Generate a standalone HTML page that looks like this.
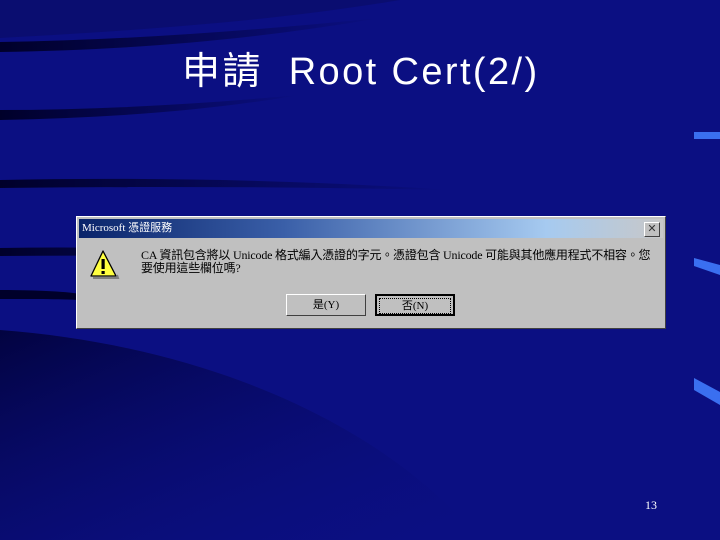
<!DOCTYPE html>
<html><head><meta charset="utf-8"><style>
body{margin:0;width:720px;height:540px;overflow:hidden;background:#0b0f82;font-family:"Liberation Sans","Noto Sans CJK TC",sans-serif;position:relative}
svg.bg{position:absolute;left:0;top:0}
.title{position:absolute;left:182px;top:40px;color:#fff;font-size:38px;letter-spacing:2.4px;font-family:"Liberation Sans","Noto Sans CJK TC",sans-serif;white-space:nowrap}
.dlg{position:absolute;left:76px;top:216px;width:590px;height:113px;background:#c0c0c0;border-top:1px solid #fff;border-left:1px solid #fff;border-right:1px solid #404040;border-bottom:1px solid #404040;box-sizing:border-box}
.tb{position:absolute;left:2px;top:2px;right:2px;height:19px;background:linear-gradient(90deg,#0a246a 0%,#3a5fa8 35%,#a6caf0 80%,#c8c8c8 100%);color:#fff;font-size:11px;line-height:19px;padding-left:3px;font-family:"Liberation Serif","Noto Sans CJK TC",serif}
.x{position:absolute;right:3px;top:3px;width:14px;height:13px;background:#c0c0c0;border:1px solid;border-color:#fff #404040 #404040 #fff;font-size:11px;line-height:12px;text-align:center;color:#333}
.msg{position:absolute;left:64px;top:32px;font-size:12px;line-height:13px;color:#000;font-family:"Liberation Serif","Noto Sans CJK TC",serif;white-space:nowrap;letter-spacing:-0.2px}
.btn{position:absolute;top:77px;width:80px;height:22px;background:#c0c0c0;box-sizing:border-box;border:1px solid;border-color:#fff #404040 #404040 #fff;font-size:11px;text-align:center;line-height:20px;font-family:"Liberation Serif","Noto Sans CJK TC",serif}
.b2{border:2px solid #000}
.b2 span{display:block;margin:2px;border:1px dotted #000;line-height:14px}
.num{position:absolute;left:645px;top:498px;color:#fff;font-size:12px;font-family:"Liberation Serif",serif}
</style></head><body>
<svg class="bg" width="720" height="540">
<defs><linearGradient id="g" x1="0" y1="0" x2="1" y2="1"><stop offset="0" stop-color="#000030"/><stop offset="1" stop-color="#0b0f82" stop-opacity="0"/></linearGradient>
<linearGradient id="s" x1="0" x2="1"><stop offset="0" stop-color="#00002a"/><stop offset="1" stop-color="#00002a" stop-opacity="0"/></linearGradient></defs>
<path d="M0,38 C150,30 280,20 400,0 L0,0Z" fill="#0a0d70"/>
<path d="M0,42 C120,40 240,32 380,18 C240,42 120,50 0,52Z" fill="url(#s)"/>
<path d="M0,110 C100,110 200,104 300,95 C200,112 100,118 0,120Z" fill="url(#s)"/>
<path d="M0,180 C150,177 300,180 450,190 C300,187 150,186 0,188Z" fill="url(#s)"/>
<path d="M0,248 C120,246 240,250 360,262 C240,256 120,255 0,256Z" fill="url(#s)"/>
<path d="M0,290 C40,290 70,292 80,294 L80,300 C60,299 30,299 0,299Z" fill="#00002a"/>
<path d="M0,330 C200,345 380,420 480,540 L0,540Z" fill="url(#g)" opacity="0.8"/>
<rect x="694" y="132" width="26" height="7" fill="#3a6ff0"/>
<path d="M694,258 L720,265 L720,275 L694,266Z" fill="#3a6ff0"/>
<path d="M694,378 L720,392 L720,405 L694,390Z" fill="#3a6ff0"/>
</svg>
<div class="title">申請&nbsp; Root Cert(2/)</div>
<div class="dlg">
<div class="tb">Microsoft 憑證服務<div class="x">✕</div></div>
<svg style="position:absolute;left:12px;top:32px" width="32" height="32"><path d="M14,2 L27,27 L2,27Z" fill="#ffff40" stroke="#000" stroke-width="1.3" stroke-linejoin="round"/><path d="M4,29 L29,29 L28,26" stroke="#808080" stroke-width="2" fill="none"/><rect x="12.5" y="10" width="3.2" height="10" fill="#000"/><rect x="12.5" y="22" width="3.2" height="3" fill="#000"/></svg>
<div class="msg">CA 資訊包含將以 Unicode 格式編入憑證的字元。憑證包含 Unicode 可能與其他應用程式不相容。您<br>要使用這些欄位嗎?</div>
<div class="btn" style="left:209px">是(Y)</div>
<div class="btn b2" style="left:298px"><span>否(N)</span></div>
</div>
<div class="num">13</div>
</body></html>
